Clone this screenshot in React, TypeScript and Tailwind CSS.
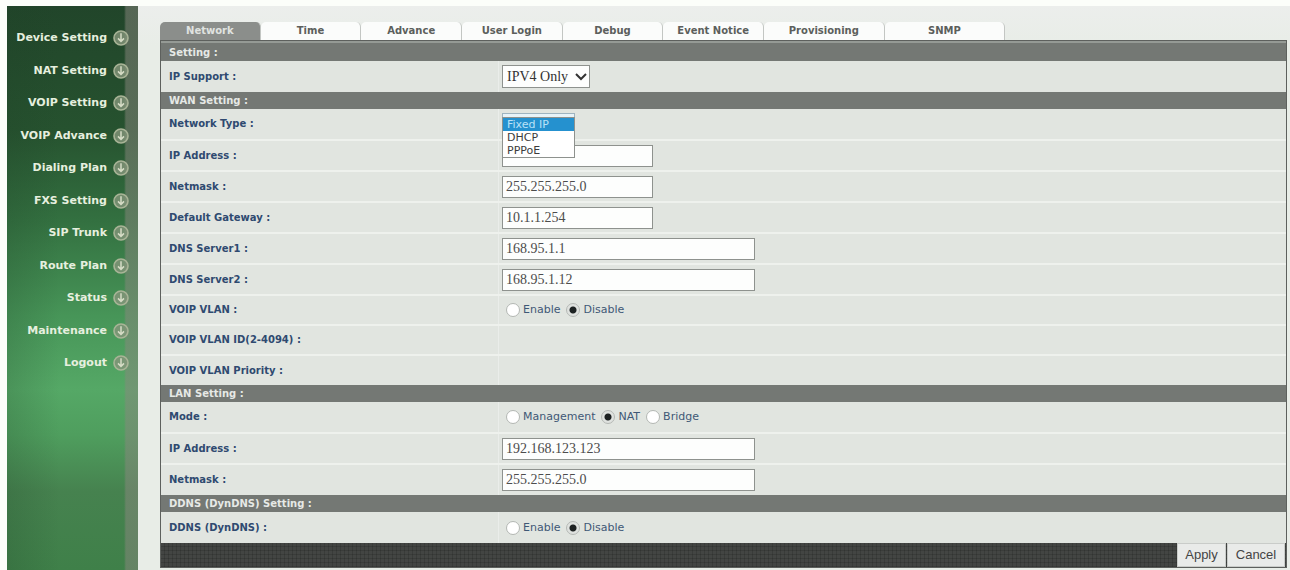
import React, { useState } from "react";

const menu = [
  "Device Setting",
  "NAT Setting",
  "VOIP Setting",
  "VOIP Advance",
  "Dialing Plan",
  "FXS Setting",
  "SIP Trunk",
  "Route Plan",
  "Status",
  "Maintenance",
  "Logout",
];

const tabs = [
  { name: "Network", grow: "flex-[100]" },
  { name: "Time", grow: "flex-[100]" },
  { name: "Advance", grow: "flex-[100]" },
  { name: "User Login", grow: "flex-[100]" },
  { name: "Debug", grow: "flex-[100]" },
  { name: "Event Notice", grow: "flex-[100]" },
  { name: "Provisioning", grow: "flex-[120]" },
  { name: "SNMP", grow: "flex-[120]" },
];

function MenuIcon() {
  return (
    <svg viewBox="0 0 16 16" className="size-4 shrink-0" fill="none" aria-hidden="true">
      <circle cx="8" cy="8" r="7" fill="#84957a" fillOpacity="0.8" stroke="#a9b497" strokeWidth="1.6" />
      <path d="M8 3.2v8M5 8.4L8 11.4l3-3" stroke="#d6dcc6" strokeWidth="1.5" />
    </svg>
  );
}

function Section({ title, first = false }: { title: string; first?: boolean }) {
  return (
    <tr className={first ? "h-[19px] border-t-2 border-[#959a95]" : "h-[17px]"}>
      <th
        colSpan={2}
        scope="colgroup"
        className="bg-[#747874] p-0 pl-2 text-left text-[10px] leading-[17px] font-bold text-[#e6e9e6]"
      >
        {title} :
      </th>
    </tr>
  );
}

function Row({
  label,
  htmlFor,
  short = false,
  last = false,
  children,
}: {
  label: string;
  htmlFor?: string;
  short?: boolean;
  last?: boolean;
  children?: React.ReactNode;
}) {
  const height = short ? "h-[30px]" : "h-[31px]";
  const line = last ? "" : "border-b-2 border-[#eef1ed]";
  return (
    <tr className={`${height} ${line}`}>
      <th
        scope="row"
        className="border-r border-[#eaedea] p-0 pl-2 text-left text-[10px] leading-4 font-bold text-[#2f4a70]"
      >
        {htmlFor ? <label htmlFor={htmlFor}>{label} :</label> : <span>{label} :</span>}
      </th>
      <td className="p-0 pl-[3px] align-middle">{children}</td>
    </tr>
  );
}

function TextField({ id, value, wide = false }: { id: string; value: string; wide?: boolean }) {
  return (
    <input
      id={id}
      type="text"
      defaultValue={value}
      className={`block h-[22px] border border-[#8e928e] bg-[#fdfefd] px-[3px] font-['Liberation_Serif',serif] text-sm text-[#4c4c4c] outline-none ${
        wide ? "w-[253px]" : "w-[151px]"
      }`}
    />
  );
}

function Radios({ name, options, initial }: { name: string; options: string[]; initial: string }) {
  const [value, setValue] = useState(initial);
  return (
    <div className="flex items-center gap-[6px] pl-1" role="radiogroup" aria-label={name}>
      {options.map((o) => (
        <label key={o} className="flex items-center gap-[3px] text-[11px] leading-4 text-[#3f5876]">
          <input
            type="radio"
            name={name}
            checked={value === o}
            onChange={() => setValue(o)}
            className="size-[14px] appearance-none rounded-full border border-[#b3b7b3] bg-white checked:bg-[radial-gradient(circle,#1d2222_0_3px,#dfe2df_4px)]"
          />
          {o}
        </label>
      ))}
    </div>
  );
}

function NetworkType() {
  const options = ["Fixed IP", "DHCP", "PPPoE"];
  const [value, setValue] = useState("Fixed IP");
  return (
    <div className="relative w-[73px]">
      <select
        id="network-type"
        value={value}
        onChange={(e) => setValue(e.target.value)}
        className="block h-[22px] w-full appearance-none border border-[#9fb4c0] bg-[#e8f3f8] px-1 font-['Liberation_Serif',serif] text-sm"
      >
        {options.map((o) => (
          <option key={o}>{o}</option>
        ))}
      </select>
      <ul
        role="listbox"
        aria-label="Network Type"
        className="absolute top-1 left-0 z-10 w-full border border-[#8e928e] bg-white text-[11px] leading-[13px] text-[#3c3c3c]"
      >
        {options.map((o) => (
          <li
            key={o}
            role="option"
            aria-selected={value === o}
            onClick={() => setValue(o)}
            className="px-1 aria-selected:bg-[#2591cf] aria-selected:text-[#b9e2f8]"
          >
            {o}
          </li>
        ))}
      </ul>
    </div>
  );
}

export default function App() {
  const [active, setActive] = useState("Network");
  return (
    <div className="flex min-h-screen bg-[#fcfefa] pt-[6px] pl-[7px] font-['DejaVu_Sans',Verdana,sans-serif]">
      <aside className="flex w-[131px] shrink-0 bg-[linear-gradient(to_right,transparent_0_117px,#8a877f80_119px),linear-gradient(to_right,#1f402633,transparent_40%),linear-gradient(#21452a_0%,#26522f_22%,#337040_38%,#479558_55%,#55a866_68%,#4f9e5e_76%,#46824f_86%,#3f8049_100%)]">
        <nav className="w-full pt-[24px] pr-[9px]" aria-label="Main">
          <ul className="flex h-[341px] flex-col justify-between">
            {menu.map((m) => (
              <li key={m}>
                <a
                  href="#"
                  className="flex items-center justify-end gap-[6px] text-[11px] leading-4 font-bold whitespace-nowrap text-[#e6efdf]"
                >
                  {m}
                  <MenuIcon />
                </a>
              </li>
            ))}
          </ul>
        </nav>
      </aside>

      <main className="min-w-0 flex-1 bg-[linear-gradient(#eceeec,#e8ede7_40px)] pt-4 pr-[3px] pb-px pl-[22px]">
        <div className="flex w-[75%] items-end" role="tablist">
          {tabs.map((t) => (
            <button
              key={t.name}
              type="button"
              role="tab"
              aria-selected={active === t.name}
              onClick={() => setActive(t.name)}
              className={`h-[18px] min-w-0 basis-0 rounded-t-[5px] border-r border-[#c3c6c3] bg-[#fbfcfb] text-[10px] leading-[18px] font-bold whitespace-nowrap text-[#5c5f5c] aria-selected:bg-[#8b8e8b] aria-selected:text-[#e0e3e0] ${t.grow}`}
            >
              {t.name}
            </button>
          ))}
        </div>

        <form className="border border-[#5d605d]" onSubmit={(e) => e.preventDefault()}>
          <table className="w-full table-fixed border-collapse bg-[#e1e5e0]">
            <colgroup>
              <col className="w-[30%]" />
              <col />
            </colgroup>
            <tbody>
              <Section title="Setting" first />
              <Row label="IP Support" htmlFor="ip-support" last>
                <div className="relative w-[88px]">
                  <select
                    id="ip-support"
                    className="block h-[23px] w-full appearance-none border border-[#8e928e] bg-[#fdfefd] px-1 font-['Liberation_Serif',serif] text-sm text-[#333]"
                  >
                    <option>IPV4 Only</option>
                    <option>IPV6 Only</option>
                  </select>
                  <svg
                    viewBox="0 0 12 8"
                    className="pointer-events-none absolute top-2 right-[3px] h-2 w-3"
                    fill="none"
                    aria-hidden="true"
                  >
                    <path d="M1 1l5 5 5-5" stroke="#333" strokeWidth="2" />
                  </svg>
                </div>
              </Row>
              <Section title="WAN Setting" />
              <Row label="Network Type" htmlFor="network-type">
                <NetworkType />
              </Row>
              <Row label="IP Address" htmlFor="wan-ip">
                <TextField id="wan-ip" value="" />
              </Row>
              <Row label="Netmask" htmlFor="wan-mask">
                <TextField id="wan-mask" value="255.255.255.0" />
              </Row>
              <Row label="Default Gateway" htmlFor="gateway">
                <TextField id="gateway" value="10.1.1.254" />
              </Row>
              <Row label="DNS Server1" htmlFor="dns1">
                <TextField id="dns1" value="168.95.1.1" wide />
              </Row>
              <Row label="DNS Server2" htmlFor="dns2">
                <TextField id="dns2" value="168.95.1.12" wide />
              </Row>
              <Row label="VOIP VLAN" short>
                <Radios name="VOIP VLAN" options={["Enable", "Disable"]} initial="Disable" />
              </Row>
              <Row label="VOIP VLAN ID(2-4094)" short />
              <Row label="VOIP VLAN Priority" short last />
              <Section title="LAN Setting" />
              <Row label="Mode">
                <Radios name="Mode" options={["Management", "NAT", "Bridge"]} initial="NAT" />
              </Row>
              <Row label="IP Address" htmlFor="lan-ip">
                <TextField id="lan-ip" value="192.168.123.123" wide />
              </Row>
              <Row label="Netmask" htmlFor="lan-mask" last>
                <TextField id="lan-mask" value="255.255.255.0" wide />
              </Row>
              <Section title="DDNS (DynDNS) Setting" />
              <Row label="DDNS (DynDNS)" last>
                <Radios name="DDNS" options={["Enable", "Disable"]} initial="Disable" />
              </Row>
            </tbody>
          </table>
          <div className="flex justify-end gap-px bg-[#434543] bg-[repeating-linear-gradient(to_right,#0000_0_3px,#0002_3px_4px),repeating-linear-gradient(#0000_0_3px,#0002_3px_4px)] pr-px">
            <button
              type="submit"
              className="h-6 w-[49px] border border-[#c9ccc9] bg-[#e9ebe9] font-['Liberation_Sans',sans-serif] text-[13px] leading-5 text-[#444]"
            >
              Apply
            </button>
            <button
              type="reset"
              className="h-6 w-[58px] border border-[#c9ccc9] bg-[#e9ebe9] font-['Liberation_Sans',sans-serif] text-[13px] leading-5 text-[#444]"
            >
              Cancel
            </button>
          </div>
        </form>
      </main>
    </div>
  );
}
